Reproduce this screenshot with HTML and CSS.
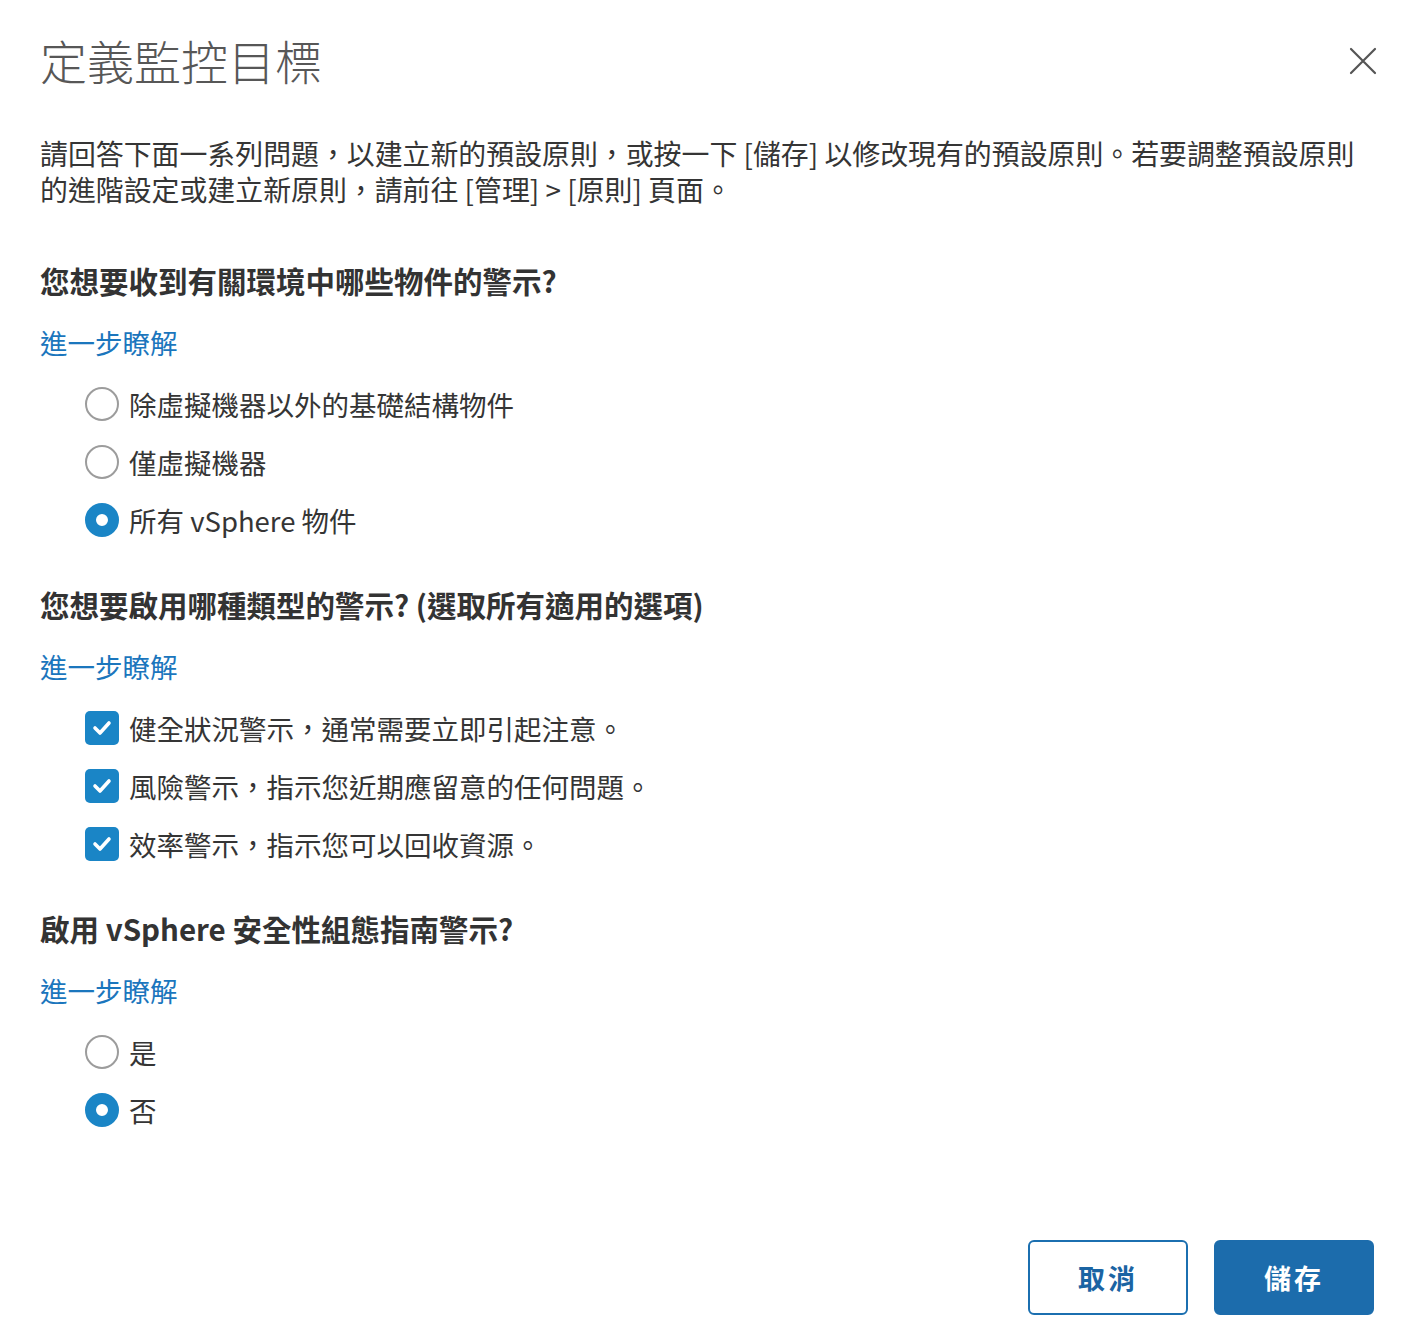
FILE: index.html
```html
<!DOCTYPE html>
<html lang="zh-Hant">
<head>
    <meta charset="UTF-8">
    <meta name="viewport" content="width=device-width, initial-scale=1.0">
    <title>定義監控目標</title>
    <link rel="stylesheet" href="styles.css">
</head>
<body>
    <div class="dialog">
        <div class="dialog-header">
            <h1>定義監控目標</h1>
            <button class="close" aria-label="關閉">
                <svg width="28" height="28" viewBox="0 0 28 28">
                    <path d="M2 2 L26 26 M26 2 L2 26" stroke="#555" stroke-width="2.2" fill="none" stroke-linecap="round"/>
                </svg>
            </button>
        </div>

        <p class="intro">請回答下面一系列問題，以建立新的預設原則，或按一下 [儲存] 以修改現有的預設原則。若要調整預設原則的進階設定或建立新原則，請前往 [管理] &gt; [原則] 頁面。</p>

        <div class="section">
            <h2>您想要收到有關環境中哪些物件的警示?</h2>
            <a href="#" class="more">進一步瞭解</a>
            <div class="options">
                <label class="option"><span class="radio"></span>除虛擬機器以外的基礎結構物件</label>
                <label class="option"><span class="radio"></span>僅虛擬機器</label>
                <label class="option"><span class="radio checked"></span>所有 vSphere 物件</label>
            </div>
        </div>

        <div class="section">
            <h2>您想要啟用哪種類型的警示? (選取所有適用的選項)</h2>
            <a href="#" class="more">進一步瞭解</a>
            <div class="options">
                <label class="option">
                    <span class="checkbox"><svg width="20" height="16" viewBox="0 0 20 16"><path d="M3 8 L8 13 L17 3" stroke="#fff" stroke-width="3.6" fill="none" stroke-linecap="round" stroke-linejoin="round"/></svg></span>健全狀況警示，通常需要立即引起注意。
                </label>
                <label class="option">
                    <span class="checkbox"><svg width="20" height="16" viewBox="0 0 20 16"><path d="M3 8 L8 13 L17 3" stroke="#fff" stroke-width="3.6" fill="none" stroke-linecap="round" stroke-linejoin="round"/></svg></span>風險警示，指示您近期應留意的任何問題。
                </label>
                <label class="option">
                    <span class="checkbox"><svg width="20" height="16" viewBox="0 0 20 16"><path d="M3 8 L8 13 L17 3" stroke="#fff" stroke-width="3.6" fill="none" stroke-linecap="round" stroke-linejoin="round"/></svg></span>效率警示，指示您可以回收資源。
                </label>
            </div>
        </div>

        <div class="section">
            <h2>啟用 vSphere 安全性組態指南警示?</h2>
            <a href="#" class="more">進一步瞭解</a>
            <div class="options">
                <label class="option"><span class="radio"></span>是</label>
                <label class="option"><span class="radio checked"></span>否</label>
            </div>
        </div>

        <div class="dialog-footer">
            <button class="btn btn-outline">取消</button>
            <button class="btn btn-primary">儲存</button>
        </div>
    </div>
</body>
</html>
```

FILE: styles.css
```css
body {
    margin: 0;
    background-color: #ffffff;
    color: #353535;
    font-family: "Noto Sans CJK TC", "Noto Sans", sans-serif;
}

.dialog {
    padding: 30px 43px 0 40px;
}

.dialog-header {
    display: flex;
    justify-content: space-between;
    align-items: center;
}

.dialog-header h1 {
    margin: 0;
    font-size: 47px;
    line-height: 60px;
    font-weight: 300;
    color: #575757;
}

.close {
    border: none;
    background: none;
    padding: 0;
    margin-right: -3px;
    margin-top: 2px;
    width: 28px;
    height: 28px;
    cursor: pointer;
}

.intro {
    margin: 45px 0 0 0;
    font-size: 27.9px;
    line-height: 36px;
}

.section {
    margin-top: 55px;
}

.section + .section {
    margin-top: 37px;
}

.section h2 {
    margin: 0;
    font-size: 29.5px;
    line-height: 36px;
    font-weight: 700;
    color: #333;
}

.more {
    display: block;
    margin-top: 26px;
    font-size: 27.5px;
    line-height: 36px;
    color: #1b76bd;
    text-decoration: none;
}

.options {
    margin-top: 15px;
    padding-left: 45px;
}

.option {
    display: flex;
    align-items: center;
    height: 58px;
    font-size: 27.5px;
    color: #353535;
}

.radio {
    box-sizing: border-box;
    width: 34px;
    height: 34px;
    border: 2px solid #9c9c9c;
    border-radius: 50%;
    margin-right: 10px;
    flex-shrink: 0;
}

.radio.checked {
    border: 11px solid #1a85c6;
    background-color: #fff;
}

.checkbox {
    display: flex;
    align-items: center;
    justify-content: center;
    width: 34px;
    height: 34px;
    border-radius: 5px;
    background-color: #1a85c6;
    margin-right: 10px;
    flex-shrink: 0;
}

.dialog-footer {
    display: flex;
    justify-content: flex-end;
    gap: 26px;
    margin-top: 101px;
}

.btn {
    width: 160px;
    height: 75px;
    border-radius: 6px;
    font-family: "Noto Sans CJK TC", sans-serif;
    font-size: 27px;
    font-weight: 700;
    letter-spacing: 3px;
    cursor: pointer;
}

.btn-outline {
    background-color: #fff;
    border: 2px solid #1b6fb0;
    color: #1b64a3;
}

.btn-primary {
    background-color: #1c6cac;
    border: 2px solid #1c6cac;
    color: #fff;
}
```
